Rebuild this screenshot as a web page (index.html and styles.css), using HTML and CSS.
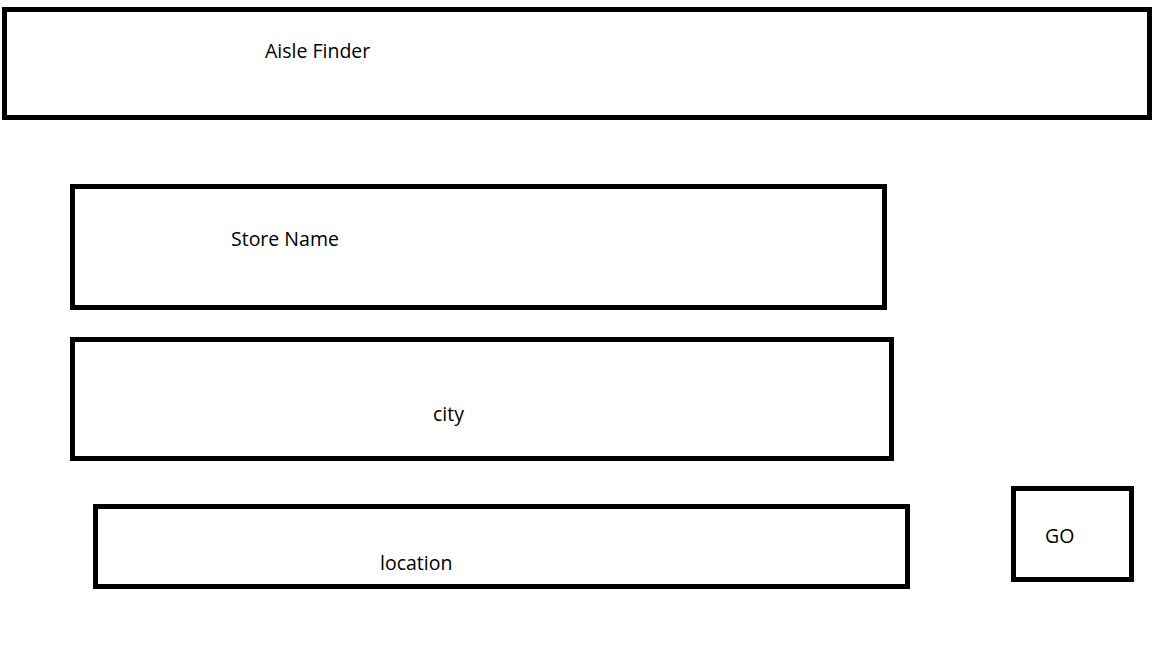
FILE: index.html
```html
<!DOCTYPE html>
<html>
    <head>
    <link rel="stylesheet" href="styles.css">
        <title>Aisle Finder</title>
    </head>
    <body>
        <div class="header">
            <span class="label header-label">Aisle Finder</span>
        </div>
        <div class="field store-field">
            <span class="label store-label">Store Name</span>
        </div>
        <div class="field city-field">
            <span class="label city-label">city</span>
        </div>
        <div class="bottom-row">
            <div class="field location-field">
                <span class="label location-label">location</span>
            </div>
            <div class="go-button">
                <span class="label go-label">GO</span>
            </div>
        </div>
    </body>
</html>
```

FILE: styles.css
```css
body {
  margin: 0;
  background-color: #fff;
  font-family: "Open Sans", "Noto Sans", sans-serif;
  font-size: 19.5px;
  line-height: 20px;
  color: #000;
}

.label {
  display: block;
}

.header, .field, .go-button {
  box-sizing: border-box;
  border: 5px solid #000;
}

.header {
  width: 1150px;
  height: 113px;
  margin: 7px 0 0 2px;
}

.header-label {
  padding: 29px 0 0 258px;
}

.store-field {
  width: 817px;
  height: 126px;
  margin: 64px 0 0 70px;
}

.store-label {
  padding: 40px 0 0 156px;
}

.city-field {
  width: 824px;
  height: 124px;
  margin: 27px 0 0 70px;
}

.city-label {
  padding: 62px 0 0 358px;
}

.bottom-row {
  display: flex;
  align-items: flex-start;
  margin-top: 25px;
}

.location-field {
  width: 817px;
  height: 85px;
  margin: 18px 0 0 93px;
}

.location-label {
  padding: 44px 0 0 282px;
}

.go-button {
  width: 123px;
  height: 96px;
  margin-left: 101px;
}

.go-label {
  padding: 35px 0 0 29px;
}
```
